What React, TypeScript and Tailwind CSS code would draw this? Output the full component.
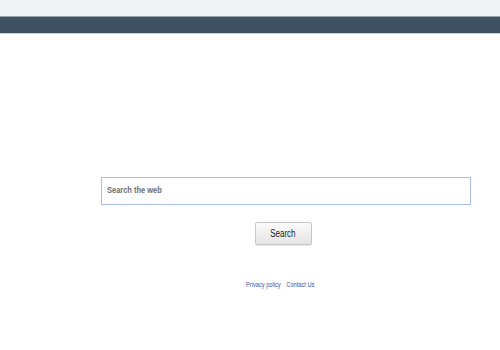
import React from 'react';

export default function App() {
  return (
    <div className="min-h-[350px] w-[500px] bg-white font-['Liberation_Sans',Arial,sans-serif]">
      <div className="h-[16px] bg-[#f1f2f3]" />
      <div className="h-[18px] border-t border-t-[#9aa3ab] border-b border-b-[#c9d0d6] bg-[#3f5261]" />

      <div className="flex flex-col items-center pt-[143px] pl-[72px]">
        <div className="w-[370px] h-[28px] border border-[#a9bde6] flex items-center px-[5px]">
          <span className="inline-block origin-left scale-x-[0.83] text-[9px] font-bold text-[#6e6e6e]">Search the web</span>
        </div>

        <button className="mt-[17px] ml-[-6px] w-[57px] h-[23px] rounded-[2px] border border-[#c6c6c6] bg-gradient-to-b from-[#fbfbfb] to-[#e4e4e4] text-[10px] text-[#222] shadow-[0_1px_1px_rgba(0,0,0,0.1)]">
          <span className="inline-block scale-x-[0.8]">Search</span>
        </button>

        <div className="mt-[35px] ml-[-12px] flex gap-[7px] scale-x-[0.81] text-[7px] text-[#2c5aa8]">
          <a>Privacy policy</a>
          <a>Contact Us</a>
        </div>
      </div>
    </div>
  );
}
